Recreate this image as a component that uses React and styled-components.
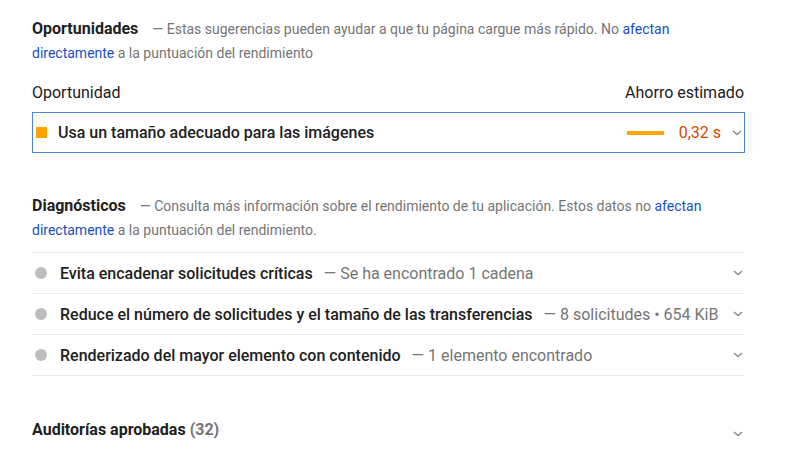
import styled, { createGlobalStyle } from "styled-components";

const GlobalStyle = createGlobalStyle`
  body {
    margin: 0;
    background: #fff;
    font-family: Roboto, "Liberation Sans", sans-serif;
    color: #212121;
  }
`;

const Page = styled.div`
  width: 713px;
  padding: 17px 0 0 32px;
`;

const GroupHeader = styled.div`
  font-size: 14px;
  line-height: 24px;
  margin-top: ${(p) => p.$top || 0}px;
`;

const GroupTitle = styled.span`
  font-size: 16px;
  font-weight: 700;
  color: #212121;
  margin-right: 14px;
`;

const Description = styled.span`
  color: #757575;
`;

const Link = styled.a`
  color: #1a4fc2;
  text-decoration: none;
`;

const TableHeader = styled.div`
  display: flex;
  justify-content: space-between;
  margin-top: 18px;
  font-size: 16px;
  line-height: 20px;
  padding-right: 1px;
`;

const OppRow = styled.div`
  box-sizing: border-box;
  height: 41px;
  margin-top: 9px;
  border: 1px solid #4a86e0;
  display: flex;
  align-items: center;
  padding: 0 2px 0 3px;
  font-size: 16px;
`;

const Square = styled.span`
  width: 11px;
  height: 11px;
  background: #ffa400;
  flex: none;
`;

const Circle = styled.span`
  width: 12px;
  height: 12px;
  border-radius: 50%;
  background: #bdbdbd;
  flex: none;
  margin-left: 3px;
`;

const Title = styled.span`
  font-weight: 500;
  color: #212121;
  margin-left: ${(p) => p.$gap}px;
  white-space: nowrap;
`;

const Detail = styled.span`
  color: #757575;
  margin-left: 11px;
  white-space: nowrap;
`;

const Spacer = styled.span`
  flex: 1;
`;

const Bar = styled.span`
  width: 37px;
  height: 4px;
  background: #ffa400;
  margin-right: 15px;
`;

const Value = styled.span`
  color: #d04a00;
  margin-right: 11px;
`;

const List = styled.div`
  margin-top: 10px;
  border-top: 1px solid #ebebeb;
`;

const ListRow = styled.div`
  box-sizing: border-box;
  height: 41px;
  border-bottom: 1px solid #ebebeb;
  display: flex;
  align-items: center;
  font-size: 16px;
  padding-right: 2px;
`;

const Passed = styled.div`
  display: flex;
  align-items: center;
  margin-top: 42px;
  font-size: 16px;
  font-weight: 700;
  line-height: 24px;
  padding-right: 2px;
`;

const Count = styled.span`
  color: #757575;
  margin-left: 4px;
`;

const ChevronBox = styled.span`
  display: flex;
  margin-top: ${(p) => p.$down || 0}px;
`;

function Chevron({ down }) {
  return (
    <ChevronBox $down={down}>
      <svg width="10" height="6" viewBox="0 0 10 6">
        <path d="M1 1 L5 4.6 L9 1" fill="none" stroke="#8a8a8a" strokeWidth="1.4" />
      </svg>
    </ChevronBox>
  );
}

const diagnostics = [
  { title: "Evita encadenar solicitudes críticas", detail: "— Se ha encontrado 1 cadena" },
  {
    title: "Reduce el número de solicitudes y el tamaño de las transferencias",
    detail: "— 8 solicitudes • 654 KiB",
  },
  { title: "Renderizado del mayor elemento con contenido", detail: "— 1 elemento encontrado" },
];

export default function App() {
  return (
    <>
      <GlobalStyle />
      <Page>
        <GroupHeader>
          <GroupTitle>Oportunidades</GroupTitle>
          <Description>
            — Estas sugerencias pueden ayudar a que tu página cargue más rápido. No{" "}
            <Link href="#">afectan directamente</Link> a la puntuación del rendimiento
          </Description>
        </GroupHeader>

        <TableHeader>
          <span>Oportunidad</span>
          <span>Ahorro estimado</span>
        </TableHeader>

        <OppRow>
          <Square />
          <Title $gap={11}>Usa un tamaño adecuado para las imágenes</Title>
          <Spacer />
          <Bar />
          <Value>0,32 s</Value>
          <Chevron />
        </OppRow>

        <GroupHeader $top={41}>
          <GroupTitle>Diagnósticos</GroupTitle>
          <Description>
            — Consulta más información sobre el rendimiento de tu aplicación. Estos datos no{" "}
            <Link href="#">afectan directamente</Link> a la puntuación del rendimiento.
          </Description>
        </GroupHeader>

        <List>
          {diagnostics.map((d) => (
            <ListRow key={d.title}>
              <Circle />
              <Title $gap={13}>{d.title}</Title>
              <Detail>{d.detail}</Detail>
              <Spacer />
              <Chevron />
            </ListRow>
          ))}
        </List>

        <Passed>
          <span>Auditorías aprobadas</span>
          <Count>(32)</Count>
          <Spacer />
          <Chevron down={8} />
        </Passed>
      </Page>
    </>
  );
}
